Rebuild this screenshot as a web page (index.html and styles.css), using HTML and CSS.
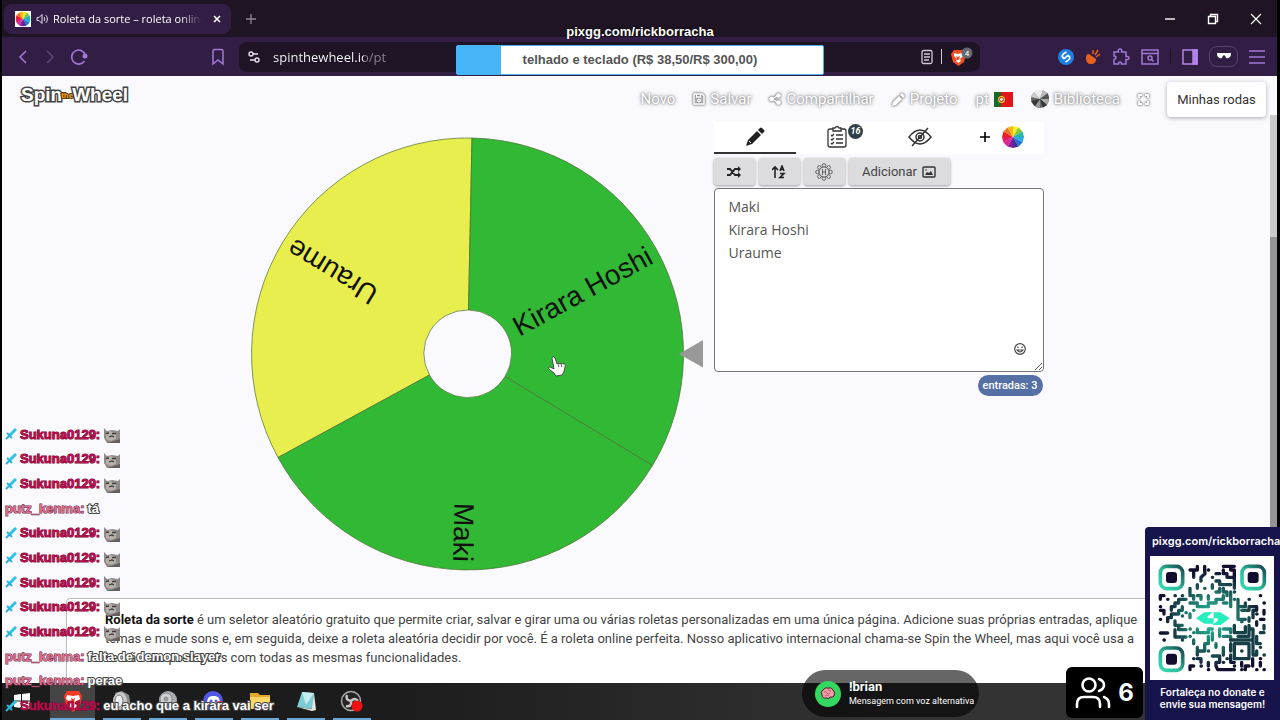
FILE: index.html
```html
<!DOCTYPE html>
<html lang="pt">
<head>
	<meta charset="UTF-8">
	<title>Roleta da sorte – roleta online</title>
	<link rel="stylesheet" href="styles.css">
</head>
<body>

	<svg class="defs" width="0" height="0">
		<defs>
			<symbol id="sword" viewBox="0 0 12 12"><path d="M11 1 4 8" fill="none" stroke="#2bc4e8" stroke-width="3"/><path d="M2 5l5 5M4 8l-3 3" fill="none" stroke="#2bb4d8" stroke-width="2"/></symbol>
			<symbol id="cat" viewBox="0 0 16 15">
				<path d="M0 0l3 3 5-1 6 1 2-2v14H3L0 10z" fill="#908b88"/>
				<path d="M2 5l4-2 6 2v6l-5 2-5-2z" fill="#b5b0ac"/>
				<path d="M2 5.500l3-.5M8 5.500h4M5 9l3-1 2 1" stroke="#3e3a3b" stroke-width="1.300" fill="none"/>
				<path d="M3 15l13-4v4z" fill="#65605f"/>
			</symbol>
			<symbol id="colors" viewBox="-12 -12 24 24">
				<path d="M0 0V-12L6-10.400z" fill="#f7ee1b"/><path d="M0 0 6-10.400 10.400-6z" fill="#82c63d"/>
				<path d="M0 0 10.400-6 12 0z" fill="#26b7a1"/><path d="M0 0H12L10.400 6z" fill="#28a9ee"/>
				<path d="M0 0 10.400 6 6 10.400z" fill="#2370cc"/><path d="M0 0 6 10.400 0 12z" fill="#45309a"/>
				<path d="M0 0V12L-6 10.400z" fill="#8c1b9b"/><path d="M0 0-6 10.400-10.400 6z" fill="#d6249a"/>
				<path d="M0 0-10.400 6-12 0z" fill="#e71963"/><path d="M0 0H-12L-10.400-6z" fill="#e92020"/>
				<path d="M0 0-10.400-6-6-10.400z" fill="#f26d1e"/><path d="M0 0-6-10.400 0-12z" fill="#fab71c"/>
			</symbol>
		</defs>
	</svg>

	<div class="browser">
		<div class="tabstrip">
			<div class="tab">
				<svg class="favicon" viewBox="0 0 16 16"><path fill="#fff" d="M0 0h16v16H0z"/><use href="#colors" width="15" height="15" x=".5" y=".5"/></svg>
				<svg width="12" height="12" viewBox="0 0 12 12" fill="none" stroke="#e8e0ee"><path d="M1 4.500h2l3-3v9l-3-3H1zM8 4c1 1 1 3 0 4M9.500 2c2.500 2 2.500 6 0 8"/></svg>
				<span class="tab-title">Roleta da sorte – roleta online</span>
				<button type="button" class="tab-close" aria-label="Fechar guia"><svg width="8" height="8" viewBox="0 0 8 8" stroke="#fff" stroke-width="1.600"><path d="M1 1l6 6M7 1 1 7"/></svg></button>
			</div>
			<button type="button" class="new-tab" aria-label="Nova guia"><svg width="10" height="10" viewBox="0 0 10 10" stroke="#8d8494" stroke-width="1.300"><path d="M5 0v10M0 5h10"/></svg></button>
			<div class="window-buttons">
				<button type="button" aria-label="Minimizar"><svg width="12" height="12" viewBox="0 0 12 12" stroke="#fff" stroke-width="1.400"><path d="M1 6h10"/></svg></button>
				<button type="button" aria-label="Restaurar"><svg width="12" height="12" viewBox="0 0 12 12" stroke="#fff" stroke-width="1.400" fill="none"><path d="M1.500 3.500h7v7h-7zM3.500 3V1.500h7v7H9"/></svg></button>
				<button type="button" aria-label="Fechar"><svg width="12" height="12" viewBox="0 0 12 12" stroke="#fff" stroke-width="1.300"><path d="M1 1l10 10M11 1 1 11"/></svg></button>
			</div>
		</div>

		<div class="toolbar">
			<div class="history">
				<button type="button" aria-label="Voltar"><svg width="16" height="18" viewBox="0 0 16 18" fill="none" stroke="#a377d6" stroke-width="1.600"><path d="M12 3 6 9l6 6"/></svg></button>
				<button type="button" aria-label="Avançar"><svg width="16" height="18" viewBox="0 0 16 18" fill="none" stroke="#5c4375" stroke-width="1.600"><path d="M5 3l6 6-6 6"/></svg></button>
				<button type="button" aria-label="Recarregar"><svg width="18" height="18" viewBox="0 0 18 18" fill="none" stroke="#a377d6" stroke-width="1.600"><path d="M14.500 13A7 7 0 1 1 15.500 7.500"/><circle cx="15" cy="8" r="1.700" fill="#a377d6"/></svg></button>
			</div>
			<button type="button" aria-label="Favoritos"><svg width="14" height="18" viewBox="0 0 14 18" fill="none" stroke="#a377d6" stroke-width="1.500"><path d="M2 3q0-1.500 1.500-1.500h7Q12 1.500 12 3v13l-5-4-5 4z"/></svg></button>
			<div class="address">
				<svg width="14" height="14" viewBox="0 0 14 14" fill="none" stroke="#e6e0ec" stroke-width="1.400"><circle cx="4" cy="4" r="2"/><path d="M6 4h5M3 10h5"/><circle cx="10" cy="10" r="2"/></svg>
				<input type="text" class="url" aria-label="Endereço" value="spinthewheel.io/pt">
				<button type="button" aria-label="Modo leitura"><svg width="12" height="16" viewBox="0 0 12 16" fill="none" stroke="#cfc8d6" stroke-width="1.300"><rect x="1" y="1.500" width="10" height="13" rx="1.500"/><path d="M3 5h6M3 8h6M3 11h5"/></svg></button>
				<i class="divider"></i>
				<button type="button" aria-label="Brave Shields"><svg width="24" height="20" viewBox="0 0 24 20"><path d="M4 3h9l3 4-2 8-5.500 4L3 15 1 7z" fill="#ee5023"/><path d="M4 6l4 1 4-1 1 3-3 3 1 2-2.500 2L6 14l1-2-3-3z" fill="#fff"/><path d="M6 9l2 1 2-1-1 4H7z" fill="#ee5023"/><circle cx="17" cy="6" r="5.500" fill="#666a73"/><text x="17" y="9" fill="#fff" font-size="8" text-anchor="middle" font-family="Roboto, sans-serif">4</text></svg></button>
			</div>
			<div class="extensions">
				<button type="button" aria-label="Shazam"><svg width="16" height="16" viewBox="0 0 16 16"><circle cx="8" cy="8" r="8" fill="#1b7fe3"/><path d="M6.500 10C2 7 5 5 8.500 3M9.500 6C14 9 11 11 7.500 13M8.500 7.500l-2 2M9.500 6.500l-2 2" stroke="#fff" stroke-width="1.700" fill="none"/></svg></button>
				<button type="button" aria-label="Extensão"><svg width="16" height="16" viewBox="0 0 16 16"><path d="M1 9q0-4 3-4l7 5q0 5-5 5-5 0-5-6" fill="#e9611c"/><path d="M8 5V1M10 6l3-5M11 8l4-3" stroke="#e9611c" stroke-width="1.500"/></svg></button>
				<button type="button" aria-label="Extensões"><svg width="18" height="18" viewBox="0 0 18 18" fill="none" stroke="#a377d6" stroke-width="1.500"><path d="M2 4h4.500q-1-3 1.500-3t1.500 3H14v4.500q3-.5 3 1.500t-3 1.500V16H9.500q0-2-1.500-2t-1.500 2H2v-4.500q2-.5 2-2T2 8z"/></svg></button>
				<button type="button" aria-label="Pesquisar guias"><svg width="18" height="16" viewBox="0 0 18 16" fill="none" stroke="#a377d6" stroke-width="1.500"><path d="M1 1h16v14H1zM1 4.500h16"/><circle cx="9" cy="9" r="2"/><path d="M10.500 10.500l2 2"/></svg></button>
				<i class="divider dark"></i>
				<button type="button" aria-label="Barra lateral"><svg width="16" height="16" viewBox="0 0 16 16" fill="none" stroke="#b184ec" stroke-width="1.500"><path d="M1 1h14v14H1z"/><path d="M11 1h4v14h-4z" fill="#b184ec"/></svg></button>
				<button type="button" class="profile" aria-label="Perfil"><svg width="14" height="7" viewBox="0 0 14 7" fill="#fff"><path d="M0 0h14v2l-1 2q-4 3-5-1.500H6Q5 7 1 4L0 2z"/></svg></button>
				<button type="button" aria-label="Menu"><svg width="16" height="14" viewBox="0 0 16 14" stroke="#a377d6" stroke-width="1.500"><path d="M0 1h16M0 7h16M0 13h16"/></svg></button>
			</div>
		</div>

		<div class="viewport">
			<div class="page">
				<header class="header">
					<a href="#" class="logo">Spin<small>the</small>Wheel</a>
					<nav class="nav">
						<a href="#">Novo</a>
						<a href="#"><svg class="glow" width="12" height="12" viewBox="0 0 12 12" fill="none" stroke="#fff" stroke-width="1.400"><path d="M1 1h8l2 2v8H1zM3.500 1v3h4V1"/><circle cx="6" cy="7.500" r="1.300"/></svg>Salvar</a>
						<a href="#"><svg class="glow" width="12" height="12" viewBox="0 0 12 12" fill="#fff" stroke="#fff" stroke-width="1.200"><circle cx="2.500" cy="6" r="1.700"/><circle cx="9.500" cy="2.500" r="1.700"/><circle cx="9.500" cy="9.500" r="1.700"/><path d="M9 2.500 3 6l6 3.500" fill="none"/></svg>Compartilhar</a>
						<a href="#"><svg class="glow" width="13" height="13" viewBox="0 0 13 13" fill="#fff"><path d="M0 13l1-4 6-6 3 3-6 6zM8 2l2-2 3 3-2 2z"/></svg>Projeto</a>
						<a href="#">pt<svg width="19" height="15" viewBox="0 0 19 15"><path fill="#e3141b" d="M0 0h19v15H0z"/><path fill="#176b27" d="M0 0h7v15H0z"/><circle cx="7.500" cy="7.500" r="3.500" fill="#e8cf2b"/><circle cx="7.500" cy="7.500" r="2" fill="#f4eee9" stroke="#d5202a"/></svg></a>
						<a href="#"><svg width="18" height="18" viewBox="-9 -9 18 18"><circle r="9" fill="#666"/><path d="M0 0-9-2-6-7z" fill="#ccc"/><path d="M0 0-6-7-3-9H3z" fill="#eee"/><path d="M0 0 3-9l5 3z" fill="#bbb"/><path d="M0 0 8-6l1 6z" fill="#555"/><path d="M0 0 9 0 7 6z" fill="#aaa"/><path d="M0 0 7 6 3 8.500z" fill="#333"/><path d="M0 0v9l-5-2z" fill="#999"/><path d="M0 0-5 7-9 2z" fill="#383838"/></svg>Biblioteca</a>
						<a href="#" aria-label="Tela cheia"><svg class="glow" width="11" height="11" viewBox="0 0 11 11" fill="none" stroke="#fff" stroke-width="1.800"><path d="M1 4V1h3M7 1h3v3M10 7v3H7M4 10H1V7"/></svg></a>
						<button type="button" class="my-wheels">Minhas rodas</button>
					</nav>
				</header>

				<main class="main">
					<svg class="wheel" viewBox="250 130 454 448">
						<g stroke="#4f6f31" stroke-width=".7">
							<path d="M278 457.500A216 216 0 0 1 472 138L468.500 310A43.500 43.500 0 0 0 429.500 375z" fill="#e8ee4d"/>
							<path d="M472 138A216 216 0 0 1 652.500 465.500L505 376.500A43.500 43.500 0 0 0 468.500 310z" fill="#31b834"/>
							<path d="M652.500 465.500A216 216 0 0 1 278 457.500L429.500 375A43.500 43.500 0 0 0 505 376.500z" fill="#31b834"/>
						</g>
						<g class="wheel-names" text-anchor="end">
							<text transform="translate(467.500 354) rotate(-28.800)" x="208" y="10">Kirara Hoshi</text>
							<text transform="translate(467.500 354) rotate(91.200)" x="208" y="10">Maki</text>
							<text transform="translate(467.500 354) rotate(211.200)" x="208" y="10">Uraume</text>
						</g>
						<path d="M679 354l24-14v27.500z" fill="#999"/>
						<path d="M554 369l-2-11q1-3 3 0l2 6 1-1 2 1 1-1 2 1q3-1 2 3-1 6-3 8l-6 1q-2-4-6-6-3-3 0-3l2 1z" fill="#fff" stroke="#333" stroke-width=".8"/>
						<path d="M558 364l1 3M561 364l1 3" stroke="#333" stroke-width=".8"/>
					</svg>

					<section class="panel">
						<div class="panel-tabs">
							<button type="button" class="active" aria-label="Editar"><svg width="20" height="20" viewBox="0 0 20 20" fill="#222"><path d="M1 19l2-6L12 4l4 4-9 9zM13 3l2-2q1-1 2 0l2 2q1 1 0 2l-2 2z"/><path d="M4 14l2 2" stroke="#fff"/></svg></button>
							<button type="button" aria-label="Resultados">
								<svg width="20" height="24" viewBox="0 0 20 24" fill="none" stroke="#333" stroke-width="1.300"><path d="M6 4H3Q1 4 1 6v14q0 2 2 2h14q2 0 2-2V6q0-2-2-2h-3M6 6V3h2q2-3 4 0h2v3zM4 10l1 1 2-2M9 10h7M4 14l1 1 2-2M9 14h7M4 18l1 1 2-2M9 18h7"/></svg>
								<span class="badge">16</span>
							</button>
							<button type="button" aria-label="Ocultar"><svg width="24" height="20" viewBox="0 0 24 20" fill="none" stroke="#333" stroke-width="1.500"><path d="M1 10q11-14 22 0-11 14-22 0zM20 1 4 19"/><circle cx="12" cy="10" r="4"/><circle cx="12" cy="10" r="1.500"/></svg></button>
							<button type="button" aria-label="Nova roda"><svg width="10" height="10" viewBox="0 0 10 10" stroke="#000" stroke-width="1.600"><path d="M5 0v10M0 5h10"/></svg><svg width="22" height="22"><use href="#colors"/></svg></button>
						</div>
						<div class="panel-actions">
							<button type="button" aria-label="Embaralhar"><svg width="14" height="12" viewBox="0 0 14 12" fill="none" stroke="#222" stroke-width="1.800"><path d="M0 3h3l5 6h4M0 9h3l5-6h4"/><path d="M11 0l3 3-3 3zM11 6l3 3-3 3z" fill="#222" stroke="none"/></svg></button>
							<button type="button" aria-label="Ordenar"><svg width="14" height="14" viewBox="0 0 14 14" fill="none" stroke="#222" stroke-width="1.600"><path d="M3 13V2M0 5l3-3 3 3M8 6l2-5 2 5M9 4.500h2M8 8.500h4l-4 4h4"/></svg></button>
							<button type="button" aria-label="Opções"><svg width="18" height="18" viewBox="-9 -9 18 18" fill="none" stroke="#555" stroke-width=".9"><g id="petals"><circle cy="-6.500" r="1.800"/><circle cy="6.500" r="1.800"/><circle cx="-6.500" r="1.800"/><circle cx="6.500" r="1.800"/></g><use href="#petals" transform="rotate(45)"/><circle r="5" fill="#dcdcdf"/><path d="M-1.500-3v6M1.500-3v6M-2 0h4"/></svg></button>
							<button type="button" class="add">Adicionar <svg width="14" height="12" viewBox="0 0 14 12" fill="none" stroke="#333" stroke-width="1.400"><rect x="1" y="1" width="12" height="10" rx="1"/><path d="M3 9l2-3 2 1 2-2 2 4z" fill="#333" stroke="none"/><circle cx="4" cy="4" r=".8" fill="#333" stroke="none"/></svg></button>
						</div>
						<div class="entries">
							<textarea aria-label="Entradas" spellcheck="false">Maki
Kirara Hoshi
Uraume</textarea>
							<button type="button" class="emoji" aria-label="Emoji"><svg width="12" height="12" viewBox="0 0 12 12" fill="none" stroke="#444" stroke-width="1.200"><circle cx="6" cy="6" r="5.300"/><path d="M3 7q3 4 6 0zM4 3.500v1.500M8 3.500v1.500"/></svg></button>
						</div>
						<span class="count">entradas: 3</span>
					</section>
				</main>

				<article class="about">
					<p><b>Roleta da sorte</b> é um seletor aleatório gratuito que permite criar, salvar e girar uma ou várias roletas personalizadas em uma única página. Adicione suas próprias entradas, aplique temas e mude sons e, em seguida, deixe a roleta aleatória decidir por você. É a roleta online perfeita. Nosso aplicativo internacional chama-se Spin the Wheel, mas aqui você usa a versão em português com todas as mesmas funcionalidades.</p>
				</article>
			</div>
			<div class="scrollbar"><i></i></div>
		</div>

		<div class="taskbar">
			<button type="button" class="start" aria-label="Iniciar"><svg width="16" height="16" viewBox="0 0 16 16" fill="#fff"><path d="M0 2l7-1v6.500H0zM8 1l8-1v7.500H8zM0 8.500h7V15l-7-1zM8 8.500h8V16l-8-1z"/></svg></button>
			<button type="button" class="open current" aria-label="Brave"><svg width="20" height="22" viewBox="0 0 20 22"><path d="M4 1h12l3 5-2 10-7 6-7-6L1 6z" fill="#f33a27"/><path d="M4 5l6 1 6-1 1 4-5 4 2 3-4 3-4-3 2-3-5-4z" fill="#fff"/><path d="M8 8l2 1 2-1-1 5H9z" fill="#f33a27"/></svg></button>
			<button type="button" class="open" aria-label="Alto-falante"><svg width="20" height="22" viewBox="0 0 20 22"><path d="M3 3l7-2 7 4 2 13-8 2z" fill="#8b8b8b"/><ellipse cx="8" cy="11" rx="7" ry="9" fill="#c9c9c9"/><ellipse cx="7" cy="11" rx="4" ry="6" fill="#eee" stroke="#777"/></svg></button>
			<button type="button" class="open" aria-label="Áudio"><svg width="22" height="22" viewBox="0 0 22 22"><circle cx="11" cy="10" r="9" fill="#a9abae"/><circle cx="9" cy="9" r="6" fill="#d0d1d2" stroke="#85888b"/><circle cx="9" cy="9" r="2.500" fill="#999"/><path d="M14 13l6 2-2 5-6-1z" fill="#777"/></svg></button>
			<button type="button" class="open" aria-label="Discord"><svg width="24" height="22" viewBox="0 0 24 22"><circle cx="11" cy="11" r="10" fill="#5058e5"/><path d="M5 14Q5 9 7 7l3-1h3l3 1q2 2 2 7l-3 2-2-2h-3l-2 2z" fill="#fff"/><circle cx="9" cy="11" r="1.500" fill="#5058e5"/><circle cx="14" cy="11" r="1.500" fill="#5058e5"/><circle cx="18" cy="16" r="5" fill="#d8323b"/></svg></button>
			<button type="button" class="open" aria-label="Arquivos"><svg width="22" height="20" viewBox="0 0 22 20"><path d="M1 2h8l2 2h10v14H1z" fill="#e6a92e"/><path d="M1 6h20v12H1z" fill="#ffd767"/><path d="M5 13h12v5H5z" fill="#3a9be0"/></svg></button>
			<button type="button" class="open" aria-label="Bloco de notas"><svg width="22" height="22" viewBox="0 0 22 22"><path d="M7 2l12 1-1 16-16-2z" fill="#79ccd4"/><path d="M7 2l12 1-8 12z" fill="#c3edf0"/><path d="M2 17l15 2 2-16 2 17-4 1z" fill="#e8e7df"/></svg></button>
			<button type="button" class="open" aria-label="OBS"><svg width="24" height="22" viewBox="0 0 24 22"><circle cx="11" cy="11" r="9.500" fill="#252427" stroke="#aaa" stroke-width="1.500"/><path d="M11 11q-6-1-4-6M11 11q4-4 7 0M11 11q1 6-5 5" stroke="#c9c9c9" stroke-width="2.500" fill="none"/><circle cx="17" cy="16" r="5.500" fill="#ee1111"/></svg></button>
		</div>
	</div>

	<!-- stream overlays -->
	<div class="goal">
		<div class="goal-title">pixgg.com/rickborracha</div>
		<div class="goal-bar"><div class="goal-fill" style="width: 12%"></div><span>telhado e teclado (R$ 38,50/R$ 300,00)</span></div>
	</div>

	<div class="chat">
		<div class="sukuna"><svg><use href="#sword"/></svg><b>Sukuna0129:</b><svg class="emote"><use href="#cat"/></svg></div>
		<div class="sukuna"><svg><use href="#sword"/></svg><b>Sukuna0129:</b><svg class="emote"><use href="#cat"/></svg></div>
		<div class="sukuna"><svg><use href="#sword"/></svg><b>Sukuna0129:</b><svg class="emote"><use href="#cat"/></svg></div>
		<div class="kenma"><b>putz_kenma:</b><span>tá</span></div>
		<div class="sukuna"><svg><use href="#sword"/></svg><b>Sukuna0129:</b><svg class="emote"><use href="#cat"/></svg></div>
		<div class="sukuna"><svg><use href="#sword"/></svg><b>Sukuna0129:</b><svg class="emote"><use href="#cat"/></svg></div>
		<div class="sukuna"><svg><use href="#sword"/></svg><b>Sukuna0129:</b><svg class="emote"><use href="#cat"/></svg></div>
		<div class="sukuna"><svg><use href="#sword"/></svg><b>Sukuna0129:</b><svg class="emote"><use href="#cat"/></svg></div>
		<div class="sukuna"><svg><use href="#sword"/></svg><b>Sukuna0129:</b><svg class="emote"><use href="#cat"/></svg></div>
		<div class="kenma"><b>putz_kenma:</b><span>falta de demon slayer</span></div>
		<div class="kenma"><b>putz_kenma:</b><span>perae</span></div>
		<div class="sukuna"><svg><use href="#sword"/></svg><b>Sukuna0129:</b><span>eu acho que a kirara vai ser</span></div>
	</div>

	<div class="command">
		<svg width="26" height="26" viewBox="0 0 26 26"><circle cx="13" cy="13" r="13" fill="#34d860"/><path d="M8 9q2-3 5-2 4-1 5 2 3 3 1 6-2 2-4 1-1 3-3 1-5 1-5-3-2-3 1-5z" fill="#f29aa5" stroke="#3a2027"/><path d="M9 11q2-1 3 1t3 0M13 8q0 2 3 2M10 15q2-2 4 0" stroke="#b75a69" fill="none"/></svg>
		<div><strong>!brian</strong><small>Mensagem com voz alternativa</small></div>
	</div>

	<div class="viewers">
		<svg width="36" height="32" viewBox="0 0 36 32" fill="none" stroke="#fff" stroke-width="2.600" stroke-linecap="round"><circle cx="14" cy="8" r="6.500"/><path d="M2 30v-3q0-7 7-7h9q7 0 7 7v3M24 2q5 2 5 6t-5 6M29 20q5 2 5 7v3"/></svg>
		<span>6</span>
	</div>

	<div class="donate">
		<strong>pixgg.com/rickborracha</strong>
		<svg class="qr" viewBox="0 0 372 372">
			<defs>
				<radialGradient id="ink" gradientUnits="userSpaceOnUse" cx="185" cy="190" r="150"><stop offset=".2" stop-color="#24a78d"/><stop offset=".6" stop-color="#1c655f"/><stop offset="1" stop-color="#120f2f"/></radialGradient>
				<linearGradient id="eye" x1="0" y1="1" x2="1" y2="0"><stop offset="0" stop-color="#36dbb5"/><stop offset=".45" stop-color="#2bb797"/><stop offset="1" stop-color="#16494f"/></linearGradient>
			</defs>
			<path fill="#fff" d="M0 0h372v372H0z"/>
			<g fill="none" stroke="url(#eye)" stroke-width="11"><rect x="31" y="31" width="67" height="67" rx="19"/><rect x="276" y="31" width="67" height="67" rx="19"/><rect x="31" y="276" width="67" height="67" rx="19"/></g>
			<g fill="#130e30"><rect x="48" y="48" width="33" height="33" rx="9"/><rect x="293" y="48" width="33" height="33" rx="9"/><rect x="48" y="293" width="33" height="33" rx="9"/></g>
			<g fill="none" stroke="url(#ink)" stroke-width="10" stroke-linecap="round" stroke-linejoin="round">
				<path d="M120 42H142V31M131 42V64M164 31V42L165 53 153 64V75M175 42h1M187 64h1M198 53H209M220 31H253M242 31V42H253V97M220 42V53H231V64H253M198 75H209V86H242M187 86V97M142 86V97M164 97h1M120 97V119H131V130M198 108H209V97M220 97V108H231V119M253 108h1"/>
				<path d="M120 141H142V152H175V141H198V130H220V119M242 108V152M142 119H153V130M175 119V130M220 141H231M131 163h1M120 174V185M253 130h1"/>
				<path d="M31 130V119H42M53 130h1M75 119h1M97 119h1M31 152h1M108 130H86V141H75V152H64V163M97 152V163H86V174H64V185H53V197M31 163H42V174M31 190h1M97 180h1M108 170h1M75 195V208H97"/>
				<path d="M331 119h1M297 130h1M342 141h1M264 130V152H286V141M264 152V190H286M275 163H297V152H320V163H309V185M342 163V174M320 174h1M297 185V196M275 197h1M331 190H342M320 197V208"/>
				<path d="M31 231H53M42 252h1M75 221V243H108M86 208V221H108M97 252h1M120 219h1M120 241h1M131 230h1M131 252V263M142 219V230H175V219H187M142 285H164V263H175V241M142 274V297M175 285h1M187 230V252M209 219V241M198 263V274M220 274V297M220 219H242V230M220 241H242V252"/>
				<path d="M253 208V230H286V212M264 241H297V208M297 219H309V252M331 230H342M342 208V219M320 241V263H331M253 263V308H297V263ZM242 252H309V297M242 263V285M331 274h1M320 285V297H309M342 297h1M275 285h1" stroke="#173f48"/>
				<path d="M120 341V330H131M131 308h1M142 308H153V319M153 330h1M175 319V330M175 341h1M187 300H209V319H198V330L203 341H253M220 319h1M231 308h1M242 297V319H253M253 330h1M275 319V330M275 341h1M286 341V330H297M308 308V330M331 308h1M331 330V319M342 341h1M320 341h1"/>
			</g>
			<path fill="#fff" d="M138 163h95v48h-95z"/>
			<path fill="#25edbd" d="M138 187l25-18h26l-16 12v6h18v16h-27zM191 169h20l28 18-27 20h-25l16-13v-7h-12z"/>
		</svg>
		<p>Fortaleça no donate e<br>envie sua mensagem!</p>
	</div>

</body>
</html>
```
FILE: styles.css
```css
* {
	box-sizing: border-box;
}
body {
	margin: 0;
	height: 100vh;
	position: relative;
	overflow: hidden;
	background: #000;
	font-family: Roboto, sans-serif;
}
button {
	margin: 0;
	padding: 0;
	border: none;
	background: none;
	display: flex;
	align-items: center;
	justify-content: center;
	font: inherit;
	color: inherit;
	cursor: pointer;
}
svg {
	flex: none;
}
a {
	color: inherit;
	text-decoration: none;
}
.defs {
	position: absolute;
}
.browser {
	margin: 0 3px 0 2px;
	height: 100%;
	display: flex;
	flex-direction: column;
	background: #1e1423;
}

/* browser chrome */
.tabstrip {
	padding-left: 2px;
	height: 37px;
	display: flex;
	align-items: center;
	background: #1e1423;
}
.tab {
	padding: 0 10px 0 11px;
	width: 227px;
	height: 30px;
	display: flex;
	align-items: center;
	gap: 5px;
	border-radius: 8px;
	background: #321e45;
	font: 11px "Open Sans", sans-serif;
	color: #fff;
}
.favicon {
	width: 16px;
	height: 16px;
}
.tab-title {
	flex: 1;
	overflow: hidden;
	white-space: nowrap;
	-webkit-mask-image: linear-gradient(90deg, #000 85%, transparent);
	mask-image: linear-gradient(90deg, #000 85%, transparent);
}
.tab-close {
	margin-left: 6px;
}
.new-tab {
	width: 40px;
}
.window-buttons {
	margin-left: auto;
	display: flex;
}
.window-buttons button {
	width: 43px;
	height: 37px;
}
.toolbar {
	padding: 0 12px;
	height: 39px;
	display: flex;
	align-items: center;
	background: #321e45;
}
.history {
	margin-right: 123px;
	display: flex;
	gap: 12px;
}
.address {
	margin: 0 78px 0 14px;
	padding: 0 6px 0 8px;
	height: 30px;
	flex: 1;
	display: flex;
	align-items: center;
	gap: 8px;
	border-radius: 8px;
	background: #1e1426;
}
.url {
	padding: 0 0 0 4px;
	min-width: 0;
	flex: 1;
	border: none;
	outline: none;
	background: linear-gradient(90deg, #fff 95px, #8d8494 95px);
	-webkit-background-clip: text;
	background-clip: text;
	color: transparent;
	font: 13px "Open Sans", sans-serif;
}
.divider {
	width: 1px;
	height: 15px;
	background: #cfc8d6;
}
.divider.dark {
	background: #1e1426;
}
.extensions {
	display: flex;
	align-items: center;
	gap: 11px;
}
.profile {
	width: 29px;
	height: 21px;
	border: 1px solid #5a446e;
	border-radius: 8px;
}

/* page */
.viewport {
	min-height: 0;
	flex: 1;
	display: flex;
	background: #faf9fe;
}
.page {
	min-width: 0;
	flex: 1;
	overflow: hidden;
}
.scrollbar {
	padding-top: 39px;
	width: 7px;
	background: linear-gradient(#faf9fe 39px, #949494 39px);
}
.scrollbar i {
	height: 122px;
	display: block;
	background: #c9c9cb;
}
.header {
	padding: 0 4px 0 19px;
	height: 46px;
	display: flex;
	align-items: center;
	justify-content: space-between;
}
.logo {
	margin-bottom: 8px;
	display: flex;
	align-items: center;
	font: bold 19px "Liberation Sans", sans-serif;
	color: #fff;
	-webkit-text-stroke: 3px #444;
	paint-order: stroke fill;
}
.logo small {
	margin: 0 -1px;
	font-size: 8px;
	color: #f2a51c;
	-webkit-text-stroke: 2px #5b3c0c;
}
.nav {
	display: flex;
	align-items: center;
	gap: 18px;
	font-size: 15px;
	color: #fff;
	text-shadow: 0 0 2px #777, 0 0 4px #888;
}
.nav a {
	display: flex;
	align-items: center;
	gap: 5px;
}
.glow {
	filter: drop-shadow(0 0 1px #777) drop-shadow(0 0 1px #999);
}
.my-wheels {
	width: 99px;
	height: 35px;
	border-radius: 4px;
	background: #fff;
	box-shadow: 0 1px 4px #aaa;
	font-size: 13px;
	color: #333;
	text-shadow: none;
}
.main {
	padding-left: 21px;
	height: 476px;
	display: flex;
	justify-content: center;
	gap: 10px;
}
.wheel {
	margin-top: 8px;
	width: 454px;
	height: 448px;
}
.wheel-names {
	font: 28px "Liberation Sans", sans-serif;
	fill: #111;
}
.panel {
	width: 330px;
	display: flex;
	flex-direction: column;
}
.panel-tabs {
	height: 32px;
	display: grid;
	grid-template-columns: repeat(4, 1fr);
	background: #fff;
}
.panel-tabs button {
	gap: 12px;
	position: relative;
	border-bottom: 2px solid transparent;
}
.panel-tabs .active {
	border-color: #333;
}
.badge {
	width: 15px;
	height: 15px;
	position: absolute;
	top: 2px;
	left: 52px;
	border-radius: 50%;
	background: #2f4048;
	font: italic bold 9px/15px Roboto, sans-serif;
	color: #fff;
}
.panel-actions {
	padding: 4px 0 3px;
	display: flex;
	gap: 4px;
}
.panel-actions button {
	width: 41px;
	height: 27px;
	gap: 5px;
	border-radius: 3px;
	background: #dcdcdf;
	box-shadow: 0 1px 3px #999;
	font-size: 13px;
	color: #444;
}
.panel-actions .add {
	width: 101px;
}
.entries {
	height: 184px;
	position: relative;
}
textarea {
	padding: 6px 14px;
	width: 100%;
	height: 100%;
	display: block;
	border: 1px solid #777;
	border-radius: 4px;
	outline: none;
	background: #fff;
	font: 14px/23px "Open Sans", sans-serif;
	color: #555;
}
.emoji {
	position: absolute;
	right: 18px;
	bottom: 17px;
}
.count {
	margin: 3px 1px 0 0;
	padding: 0 5px;
	align-self: flex-end;
	border-radius: 11px;
	background: #5470a5;
	font: 500 11px/21px Roboto, sans-serif;
	color: #fff;
}
.about {
	margin: 0 64px;
	padding: 11px 38px 40px;
	border: 1px solid #bbb;
	border-radius: 4px;
	background: #fff;
	font-size: 13px;
	line-height: 19px;
	color: #444;
}
.about p {
	margin: 0;
}
.about b {
	color: #111;
}

/* taskbar */
.taskbar {
	height: 37px;
	display: flex;
	gap: 8px;
	background: linear-gradient(90deg, #1c1c1c 30%, #333 70%);
}
.taskbar button {
	width: 38px;
	border-bottom: 2px solid transparent;
}
.taskbar .start {
	width: 40px;
}
.taskbar .open {
	border-color: #6ba7d6;
}
.taskbar .current {
	width: 45px;
	background: #454545;
}

/* overlays */
.goal {
	width: 368px;
	position: absolute;
	top: 24px;
	left: 50%;
	transform: translateX(-50%);
	font: bold 13px/16px "Liberation Sans", sans-serif;
	text-align: center;
	color: #fff;
}
.goal-title {
	margin-bottom: 5px;
	text-shadow: 0 0 2px #000;
}
.goal-bar {
	height: 30px;
	display: grid;
	align-items: center;
	border: 1px solid #45b5f7;
	border-radius: 2px;
	background: #fff;
	color: #555;
}
.goal-bar > * {
	grid-area: 1 / 1;
}
.goal-fill {
	height: 28px;
	background: #45b5f7;
}
.chat {
	position: absolute;
	bottom: 2px;
	left: 5px;
	height: 296px;
	display: grid;
	grid-auto-rows: 1fr;
	font: bold 13px "Liberation Sans", sans-serif;
	color: #fff;
	-webkit-text-stroke: 2px #444;
	paint-order: stroke fill;
}
.chat div {
	display: flex;
	align-items: center;
	gap: 3px;
	white-space: nowrap;
}
.chat svg {
	width: 12px;
	height: 12px;
}
.chat .emote {
	margin: 3px 0 0 1px;
	width: 16px;
	height: 15px;
}
.sukuna b {
	color: #b80d4c;
	-webkit-text-stroke: 1px #7d0a35;
}
.kenma b {
	color: #dc6d90;
	-webkit-text-stroke: 1px #6e2b40;
}
.command {
	padding: 0 13px;
	width: 177px;
	height: 47px;
	position: absolute;
	bottom: 3px;
	left: 802px;
	display: flex;
	align-items: center;
	gap: 8px;
	border-radius: 24px;
	background: rgba(0, 0, 0, .6);
	color: #fff;
}
.command strong {
	display: block;
	font-size: 13px;
	line-height: 16px;
}
.command small {
	display: block;
	font-size: 9px;
	line-height: 13px;
	white-space: nowrap;
}
.viewers {
	width: 77px;
	height: 51px;
	position: absolute;
	right: 137px;
	bottom: 2px;
	display: flex;
	align-items: center;
	justify-content: center;
	gap: 7px;
	border-radius: 6px;
	background: #000;
	font: bold 24px Inter, sans-serif;
	color: #fff;
}
.donate {
	padding: 5px;
	width: 135px;
	height: 193px;
	position: absolute;
	right: 0;
	bottom: 0;
	border-radius: 4px 0 0 0;
	background: #17144c;
	font: 600 11px/18px Inter, sans-serif;
	color: #fff;
	white-space: nowrap;
}
.donate strong {
	padding-left: 2px;
	display: block;
	font-weight: 600;
}
.qr {
	margin: 6px 0;
	width: 124px;
	height: 124px;
	display: block;
}
.donate p {
	margin: 0;
	font-size: 10px;
	line-height: 12px;
	text-align: center;
}
```
